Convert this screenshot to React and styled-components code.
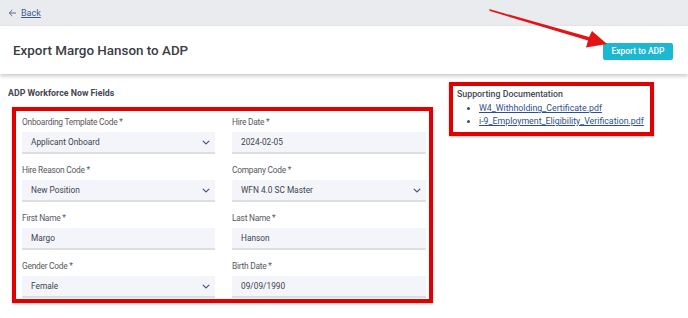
import React from 'react';
import styled, { createGlobalStyle } from 'styled-components';

const GlobalStyle = createGlobalStyle`
  html, body {
    margin: 0;
    padding: 0;
    background: #fff;
    font-family: Roboto, "Liberation Sans", Arial, sans-serif;
  }
`;

const Page = styled.div`
  position: relative;
  width: 688px;
  height: 318px;
  overflow: hidden;
  background: #fff;
`;

const TopBar = styled.div`
  height: 26px;
  background: #e9ebef;
  display: flex;
  align-items: center;
  padding-left: 8px;
  gap: 4px;
  box-sizing: border-box;
`;

const BackLink = styled.a`
  font-size: 9px;
  color: #3b5a95;
  text-decoration: underline;
  cursor: pointer;
`;

const Header = styled.header`
  height: 48px;
  background: #fff;
  display: flex;
  align-items: center;
  justify-content: space-between;
  padding: 0 15px 0 13px;
  box-shadow: 0 2px 4px rgba(0, 0, 0, 0.22);
  position: relative;
  z-index: 1;
`;

const Title = styled.h1`
  margin: 0;
  font-size: 13.4px;
  font-weight: 500;
  color: #3a3d42;
  padding-top: 1px;
`;

const ExportButton = styled.button`
  height: 17px;
  width: 70px;
  margin-top: 2px;
  border: none;
  border-radius: 2px;
  background: #1cb8d2;
  color: #fff;
  font-family: inherit;
  font-size: 8.5px;
  font-weight: 500;
  padding: 0;
  cursor: pointer;
`;

const Content = styled.div`
  display: flex;
  align-items: flex-start;
  padding-left: 8px;
`;

const FieldsSection = styled.section`
  width: 425px;
  padding-top: 13px;
`;

const SectionTitle = styled.h2`
  margin: 0;
  font-size: 8.8px;
  line-height: 12px;
  font-weight: 700;
  color: #444851;
`;

const Highlight = styled.div`
  border: 4px solid #e10000;
  box-shadow: 0 1px 2px rgba(0, 0, 0, 0.25);
`;

const FieldsBox = styled(Highlight)`
  margin: 8px 0 0 4px;
  width: 421px;
  box-sizing: border-box;
  padding: 5px 3px 1px 6px;
  display: grid;
  grid-template-columns: 193px 194px;
  column-gap: 17px;
  row-gap: 10px;
`;

const Field = styled.div`
  display: flex;
  flex-direction: column;
  gap: 4px;
`;

const Label = styled.label`
  font-size: 8.4px;
  letter-spacing: -0.25px;
  line-height: 12px;
  color: #555a62;
`;

const InputBox = styled.div`
  height: 20px;
  background: #f3f5fb;
  border-bottom: 2px solid #dcdee2;
  display: flex;
  align-items: center;
  justify-content: space-between;
  padding: 0 5px 0 9px;
  font-size: 8.3px;
  color: #3e434a;
`;

const DocsBox = styled(Highlight)`
  margin: 8px 0 0 16px;
  width: 205px;
  box-sizing: border-box;
  padding: 2px 4px 4px 4px;
`;

const DocsTitle = styled.div`
  font-size: 8.8px;
  line-height: 12px;
  font-weight: 500;
  color: #444851;
`;

const DocsList = styled.ul`
  margin: 2px 0 0;
  padding-left: 22px;
  font-size: 8.8px;
  line-height: 13px;
  color: #2f4f8c;
  white-space: nowrap;
`;

const DocLink = styled.a`
  color: #2f4f8c;
  text-decoration: underline;
`;

const ArrowOverlay = styled.svg`
  position: absolute;
  left: 0;
  top: 0;
  z-index: 2;
  pointer-events: none;
`;

const Chevron = () => (
  <svg width="8" height="5" viewBox="0 0 8 5">
    <path d="M0.8 0.8l3.2 3.2 3.2-3.2" fill="none" stroke="#4a5878" strokeWidth="1.2" />
  </svg>
);

const fields = [
  { label: 'Onboarding Template Code *', value: 'Applicant Onboard', select: true },
  { label: 'Hire Date *', value: '2024-02-05' },
  { label: 'Hire Reason Code *', value: 'New Position', select: true },
  { label: 'Company Code *', value: 'WFN 4.0 SC Master', select: true },
  { label: 'First Name *', value: 'Margo' },
  { label: 'Last Name *', value: 'Hanson' },
  { label: 'Gender Code *', value: 'Female', select: true },
  { label: 'Birth Date *', value: '09/09/1990' },
];

export default function App() {
  return (
    <Page>
      <GlobalStyle />
      <TopBar>
        <svg width="9" height="8" viewBox="0 0 9 8">
          <path d="M8 4H1.5M4.3 1L1.2 4l3.1 3" fill="none" stroke="#5d6b86" strokeWidth="1" />
        </svg>
        <BackLink>Back</BackLink>
      </TopBar>
      <Header>
        <Title>Export Margo Hanson to ADP</Title>
        <ExportButton>Export to ADP</ExportButton>
      </Header>
      <Content>
        <FieldsSection>
          <SectionTitle>ADP Workforce Now Fields</SectionTitle>
          <FieldsBox>
            {fields.map((f) => (
              <Field key={f.label}>
                <Label>{f.label}</Label>
                <InputBox>
                  <span>{f.value}</span>
                  {f.select && <Chevron />}
                </InputBox>
              </Field>
            ))}
          </FieldsBox>
        </FieldsSection>
        <DocsBox>
          <DocsTitle>Supporting Documentation</DocsTitle>
          <DocsList>
            <li><DocLink>W4_Withholding_Certificate.pdf</DocLink></li>
            <li><DocLink>i-9_Employment_Eligibility_Verification.pdf</DocLink></li>
          </DocsList>
        </DocsBox>
      </Content>
      <ArrowOverlay width="688" height="318">
        <polygon
          points="489,9 490,11 588,40.5 586,47.5 607,44 592,31 589,37"
          fill="#e41414"
        />
      </ArrowOverlay>
    </Page>
  );
}
